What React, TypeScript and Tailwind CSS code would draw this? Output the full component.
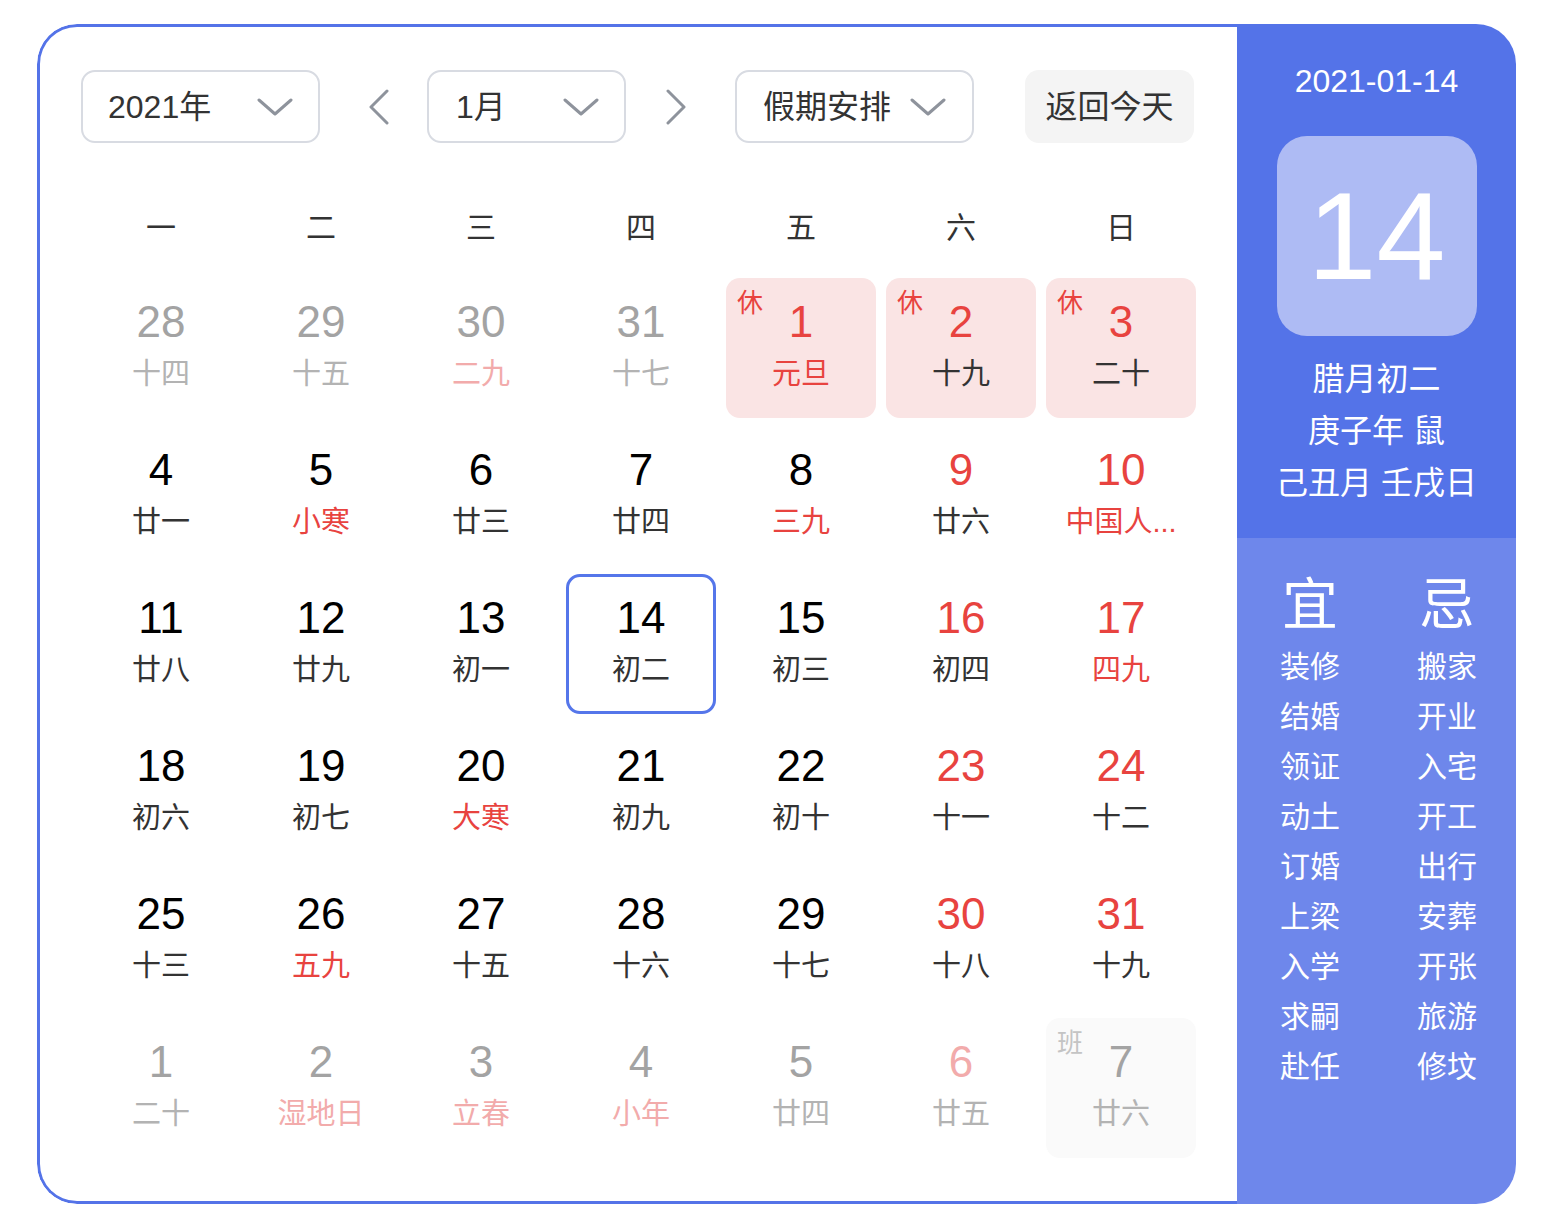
import React from "react";

type Cell = {
  d: string;
  l: string;
  numCls: string;
  lunCls: string;
  bg?: string;
  tag?: string;
  tagCls?: string;
  sel?: boolean;
};

const N = "text-black";
const L = "text-[#333333]";
const R = "text-[#e8433f]";
const G = "text-[#a3a3a3]";
const GL = "text-[#b3b3b3]";
const P = "text-[#f2abab]";

const rows: Cell[][] = [
  [
    { d: "28", l: "十四", numCls: G, lunCls: GL },
    { d: "29", l: "十五", numCls: G, lunCls: GL },
    { d: "30", l: "二九", numCls: G, lunCls: P },
    { d: "31", l: "十七", numCls: G, lunCls: GL },
    { d: "1", l: "元旦", numCls: R, lunCls: R, bg: "bg-[#fae4e4]", tag: "休", tagCls: R },
    { d: "2", l: "十九", numCls: R, lunCls: L, bg: "bg-[#fae4e4]", tag: "休", tagCls: R },
    { d: "3", l: "二十", numCls: R, lunCls: L, bg: "bg-[#fae4e4]", tag: "休", tagCls: R },
  ],
  [
    { d: "4", l: "廿一", numCls: N, lunCls: L },
    { d: "5", l: "小寒", numCls: N, lunCls: R },
    { d: "6", l: "廿三", numCls: N, lunCls: L },
    { d: "7", l: "廿四", numCls: N, lunCls: L },
    { d: "8", l: "三九", numCls: N, lunCls: R },
    { d: "9", l: "廿六", numCls: R, lunCls: L },
    { d: "10", l: "中国人...", numCls: R, lunCls: R },
  ],
  [
    { d: "11", l: "廿八", numCls: N, lunCls: L },
    { d: "12", l: "廿九", numCls: N, lunCls: L },
    { d: "13", l: "初一", numCls: N, lunCls: L },
    { d: "14", l: "初二", numCls: N, lunCls: L, sel: true },
    { d: "15", l: "初三", numCls: N, lunCls: L },
    { d: "16", l: "初四", numCls: R, lunCls: L },
    { d: "17", l: "四九", numCls: R, lunCls: R },
  ],
  [
    { d: "18", l: "初六", numCls: N, lunCls: L },
    { d: "19", l: "初七", numCls: N, lunCls: L },
    { d: "20", l: "大寒", numCls: N, lunCls: R },
    { d: "21", l: "初九", numCls: N, lunCls: L },
    { d: "22", l: "初十", numCls: N, lunCls: L },
    { d: "23", l: "十一", numCls: R, lunCls: L },
    { d: "24", l: "十二", numCls: R, lunCls: L },
  ],
  [
    { d: "25", l: "十三", numCls: N, lunCls: L },
    { d: "26", l: "五九", numCls: N, lunCls: R },
    { d: "27", l: "十五", numCls: N, lunCls: L },
    { d: "28", l: "十六", numCls: N, lunCls: L },
    { d: "29", l: "十七", numCls: N, lunCls: L },
    { d: "30", l: "十八", numCls: R, lunCls: L },
    { d: "31", l: "十九", numCls: R, lunCls: L },
  ],
  [
    { d: "1", l: "二十", numCls: G, lunCls: GL },
    { d: "2", l: "湿地日", numCls: G, lunCls: P },
    { d: "3", l: "立春", numCls: G, lunCls: P },
    { d: "4", l: "小年", numCls: G, lunCls: P },
    { d: "5", l: "廿四", numCls: G, lunCls: GL },
    { d: "6", l: "廿五", numCls: P, lunCls: GL },
    { d: "7", l: "廿六", numCls: G, lunCls: GL, bg: "bg-[#fafafa]", tag: "班", tagCls: "text-[#c4c4c4]" },
  ],
];

const weekdays = ["一", "二", "三", "四", "五", "六", "日"];
const yi = ["装修", "结婚", "领证", "动土", "订婚", "上梁", "入学", "求嗣", "赴任"];
const ji = ["搬家", "开业", "入宅", "开工", "出行", "安葬", "开张", "旅游", "修坟"];

const FONT = { fontFamily: '"Liberation Sans", Arial, "Noto Sans CJK SC", sans-serif' };

function ChevronDown() {
  return (
    <svg width="36" height="20" viewBox="0 0 36 20" fill="none">
      <path d="M2 3 L18 17 L34 3" stroke="#8e939c" strokeWidth="3" strokeLinecap="round" strokeLinejoin="round" />
    </svg>
  );
}

function Arrow({ dir }: { dir: "l" | "r" }) {
  return (
    <svg width="22" height="36" viewBox="0 0 22 36" fill="none">
      <path
        d={dir === "l" ? "M19 2 L3 18 L19 34" : "M3 2 L19 18 L3 34"}
        stroke="#8e939c"
        strokeWidth="3"
        strokeLinecap="round"
        strokeLinejoin="round"
      />
    </svg>
  );
}

function Select({ label, w, pl, pr }: { label: string; w: string; pl: string; pr: string }) {
  return (
    <div className={`flex items-center justify-between h-[73px] border-2 border-[#d8dbe2] rounded-[14px] ${w} ${pl} ${pr}`}>
      <span className="text-[32px] text-[#333333] leading-none">{label}</span>
      <ChevronDown />
    </div>
  );
}

export default function App() {
  return (
    <div className="min-h-[1230px] w-[1554px] bg-white" style={FONT}>
      <div className="ml-[37px] pt-[24px]">
        <div className="flex w-[1479px] h-[1180px] rounded-[40px] overflow-hidden">
          {/* Left */}
          <div className="w-[1200px] h-full border-l-[3px] border-t-[3px] border-b-[3px] border-[#5473e8] rounded-l-[40px] pl-[41px] pt-[43px]">
            <div className="flex items-center h-[73px]">
              <Select label="2021年" w="w-[239px]" pl="pl-[25px]" pr="pr-[25px]" />
              <div className="w-[107px] flex justify-center pl-[10px]">
                <Arrow dir="l" />
              </div>
              <Select label="1月" w="w-[199px]" pl="pl-[27px]" pr="pr-[25px]" />
              <div className="w-[109px] flex justify-center pr-[10px]">
                <Arrow dir="r" />
              </div>
              <Select label="假期安排" w="w-[239px]" pl="pl-[26px]" pr="pr-[26px]" />
              <div className="ml-[51px] w-[169px] h-[73px] rounded-[14px] bg-[#f4f4f4] flex items-center justify-center">
                <span className="text-[32px] text-[#333333] leading-none">返回今天</span>
              </div>
            </div>

            <div className="grid grid-cols-7 w-[1120px] mt-[54px] h-[60px] mb-[17px]">
              {weekdays.map((w) => (
                <div key={w} className="flex items-center justify-center text-[30px] text-[#333333]">
                  {w}
                </div>
              ))}
            </div>

            <div className="w-[1120px]">
              {rows.map((row, ri) => (
                <div key={ri} className="grid grid-cols-7 h-[148px]">
                  {row.map((c, ci) => (
                    <div key={ci} className="py-[4px] px-[5px]">
                      <div
                        className={`relative h-[140px] rounded-[14px] flex flex-col items-center ${c.bg ?? ""} ${
                          c.sel ? "border-[3px] border-[#5576ea] pt-[17px]" : "pt-[20px]"
                        }`}
                      >
                        {c.tag && (
                          <span className={`absolute left-[11px] top-[10px] text-[26px] leading-[30px] ${c.tagCls}`}>
                            {c.tag}
                          </span>
                        )}
                        <span className={`text-[44px] leading-[48px] ${c.numCls}`}>{c.d}</span>
                        <span className={`mt-[11px] text-[29px] leading-[34px] whitespace-nowrap ${c.lunCls}`}>{c.l}</span>
                      </div>
                    </div>
                  ))}
                </div>
              ))}
            </div>
          </div>

          {/* Right */}
          <div className="w-[279px] h-full flex flex-col">
            <div className="h-[514px] bg-[#5473e8] flex flex-col items-center text-white">
              <div className="mt-[39px] h-[36px] flex items-center text-[32px] leading-none">2021-01-14</div>
              <div className="mt-[37px] w-[200px] h-[200px] rounded-[30px] bg-[#aebbf4] flex items-center justify-center">
                <span className="text-[124px] leading-none">14</span>
              </div>
              <div className="mt-[17px] flex flex-col items-center text-[32px] leading-[52px]">
                <span>腊月初二</span>
                <span>庚子年 鼠</span>
                <span>己丑月 壬戌日</span>
              </div>
            </div>
            <div className="flex-1 bg-[#6e87eb] flex pl-[23px] gap-[37px] text-white">
              <div className="w-[100px] flex flex-col items-center">
                <span className="mt-[37px] text-[56px] leading-[60px]">宜</span>
                <div className="mt-[7px] flex flex-col items-center text-[30px] leading-[50px]">
                  {yi.map((t) => (
                    <span key={t}>{t}</span>
                  ))}
                </div>
              </div>
              <div className="w-[100px] flex flex-col items-center">
                <span className="mt-[37px] text-[56px] leading-[60px]">忌</span>
                <div className="mt-[7px] flex flex-col items-center text-[30px] leading-[50px]">
                  {ji.map((t) => (
                    <span key={t}>{t}</span>
                  ))}
                </div>
              </div>
            </div>
          </div>
        </div>
      </div>
    </div>
  );
}
